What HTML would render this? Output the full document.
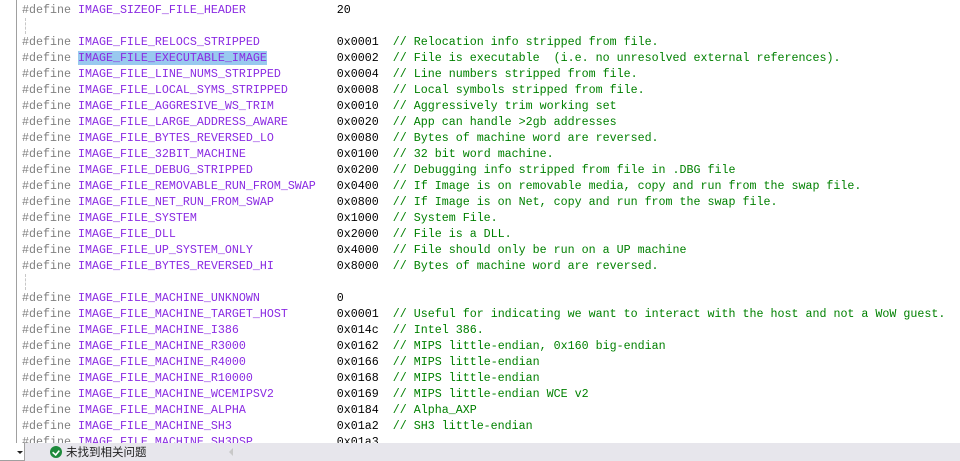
<!DOCTYPE html>
<html><head><meta charset="utf-8"><style>
html,body{margin:0;padding:0;width:960px;height:461px;overflow:hidden;background:#fff;}
#code{position:absolute;left:22px;top:2px;font-family:"Liberation Mono",monospace;font-size:11.67px;line-height:16px;white-space:pre;color:#000;}
.d{color:#808080}.m{color:#8a2be2}.c{color:#008000}
.sel{background:#99c9ef;}
#gut{position:absolute;left:16px;top:0;width:1px;height:443px;background:#a0a0a0;}
.dash{position:absolute;left:25px;width:0;border-left:1px dashed #c8c8c8;}
#status{position:absolute;left:0;top:443px;width:960px;height:18px;background:#e7e6ec;font-family:"Liberation Sans","Noto Sans CJK SC",sans-serif;font-size:11.5px;}
#dd{position:absolute;left:0;top:0;width:24px;height:17px;background:#fff;border-right:1px solid #a0a0a0;border-bottom:1px solid #a0a0a0;}
#dd:after{content:"";position:absolute;left:17px;top:8px;border-left:3px solid transparent;border-right:3px solid transparent;border-top:3px solid #222;}
#ok{position:absolute;left:50px;top:3px;width:12px;height:12px;border-radius:50%;background:#1e8a3c;}
#ok:after{content:"";position:absolute;left:3px;top:2px;width:4px;height:6px;border-right:2px solid #fff;border-bottom:2px solid #fff;transform:rotate(40deg) scale(.8);}
#msg{position:absolute;left:66px;top:1px;color:#1e1e1e;}
#arr{position:absolute;left:229px;top:5px;border-top:4px solid transparent;border-bottom:4px solid transparent;border-right:4px solid #c8c8c8;}
</style></head><body>
<div id="gut"></div>
<div class="dash" style="top:18px;height:16px"></div>
<div class="dash" style="top:274px;height:16px"></div>
<div id="code"><span class="d">#define</span> <span class="m">IMAGE_SIZEOF_FILE_HEADER</span>             20

<span class="d">#define</span> <span class="m">IMAGE_FILE_RELOCS_STRIPPED</span>           0x0001  <span class="c">// Relocation info stripped from file.</span>
<span class="d">#define</span> <span class="m sel">IMAGE_FILE_EXECUTABLE_IMAGE</span>          0x0002  <span class="c">// File is executable  (i.e. no unresolved external references).</span>
<span class="d">#define</span> <span class="m">IMAGE_FILE_LINE_NUMS_STRIPPED</span>        0x0004  <span class="c">// Line numbers stripped from file.</span>
<span class="d">#define</span> <span class="m">IMAGE_FILE_LOCAL_SYMS_STRIPPED</span>       0x0008  <span class="c">// Local symbols stripped from file.</span>
<span class="d">#define</span> <span class="m">IMAGE_FILE_AGGRESIVE_WS_TRIM</span>         0x0010  <span class="c">// Aggressively trim working set</span>
<span class="d">#define</span> <span class="m">IMAGE_FILE_LARGE_ADDRESS_AWARE</span>       0x0020  <span class="c">// App can handle &gt;2gb addresses</span>
<span class="d">#define</span> <span class="m">IMAGE_FILE_BYTES_REVERSED_LO</span>         0x0080  <span class="c">// Bytes of machine word are reversed.</span>
<span class="d">#define</span> <span class="m">IMAGE_FILE_32BIT_MACHINE</span>             0x0100  <span class="c">// 32 bit word machine.</span>
<span class="d">#define</span> <span class="m">IMAGE_FILE_DEBUG_STRIPPED</span>            0x0200  <span class="c">// Debugging info stripped from file in .DBG file</span>
<span class="d">#define</span> <span class="m">IMAGE_FILE_REMOVABLE_RUN_FROM_SWAP</span>   0x0400  <span class="c">// If Image is on removable media, copy and run from the swap file.</span>
<span class="d">#define</span> <span class="m">IMAGE_FILE_NET_RUN_FROM_SWAP</span>         0x0800  <span class="c">// If Image is on Net, copy and run from the swap file.</span>
<span class="d">#define</span> <span class="m">IMAGE_FILE_SYSTEM</span>                    0x1000  <span class="c">// System File.</span>
<span class="d">#define</span> <span class="m">IMAGE_FILE_DLL</span>                       0x2000  <span class="c">// File is a DLL.</span>
<span class="d">#define</span> <span class="m">IMAGE_FILE_UP_SYSTEM_ONLY</span>            0x4000  <span class="c">// File should only be run on a UP machine</span>
<span class="d">#define</span> <span class="m">IMAGE_FILE_BYTES_REVERSED_HI</span>         0x8000  <span class="c">// Bytes of machine word are reversed.</span>

<span class="d">#define</span> <span class="m">IMAGE_FILE_MACHINE_UNKNOWN</span>           0
<span class="d">#define</span> <span class="m">IMAGE_FILE_MACHINE_TARGET_HOST</span>       0x0001  <span class="c">// Useful for indicating we want to interact with the host and not a WoW guest.</span>
<span class="d">#define</span> <span class="m">IMAGE_FILE_MACHINE_I386</span>              0x014c  <span class="c">// Intel 386.</span>
<span class="d">#define</span> <span class="m">IMAGE_FILE_MACHINE_R3000</span>             0x0162  <span class="c">// MIPS little-endian, 0x160 big-endian</span>
<span class="d">#define</span> <span class="m">IMAGE_FILE_MACHINE_R4000</span>             0x0166  <span class="c">// MIPS little-endian</span>
<span class="d">#define</span> <span class="m">IMAGE_FILE_MACHINE_R10000</span>            0x0168  <span class="c">// MIPS little-endian</span>
<span class="d">#define</span> <span class="m">IMAGE_FILE_MACHINE_WCEMIPSV2</span>         0x0169  <span class="c">// MIPS little-endian WCE v2</span>
<span class="d">#define</span> <span class="m">IMAGE_FILE_MACHINE_ALPHA</span>             0x0184  <span class="c">// Alpha_AXP</span>
<span class="d">#define</span> <span class="m">IMAGE_FILE_MACHINE_SH3</span>               0x01a2  <span class="c">// SH3 little-endian</span>
<span class="d">#define</span> <span class="m">IMAGE_FILE_MACHINE_SH3DSP</span>            0x01a3</div>
<div id="status"><div id="dd"></div><div id="ok"></div><div id="msg">未找到相关问题</div><div id="arr"></div></div>
</body></html>
